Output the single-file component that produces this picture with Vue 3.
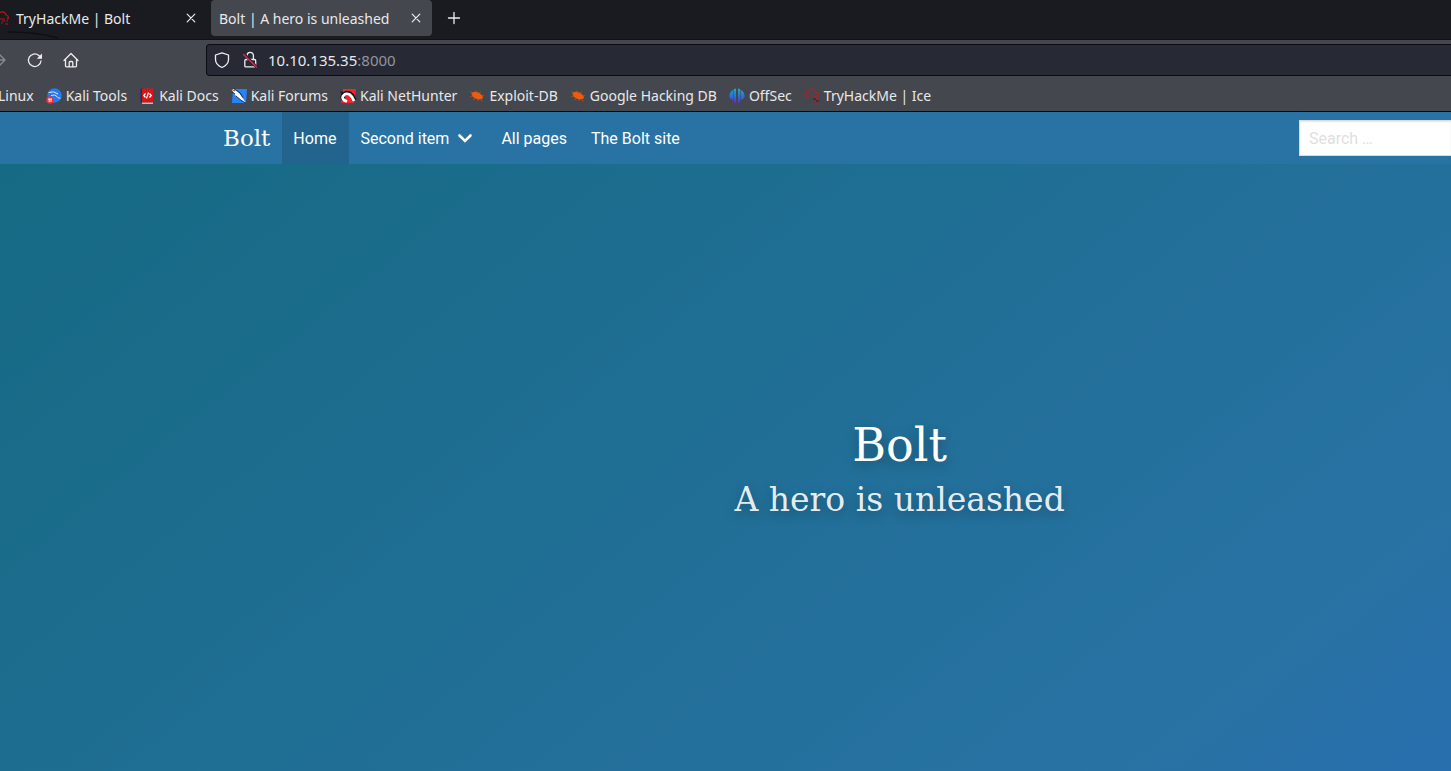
<script setup>
import { ref } from 'vue'

const address = ref('10.10.135.35:8000')
const search = ref('')
const bookmarks = [
  { label: 'Linux', icon: '' },
  { label: 'Kali Tools', icon: 'tools' },
  { label: 'Kali Docs', icon: 'docs' },
  { label: 'Kali Forums', icon: 'forums' },
  { label: 'Kali NetHunter', icon: 'nethunter' },
  { label: 'Exploit-DB', icon: 'bug' },
  { label: 'Google Hacking DB', icon: 'bug' },
  { label: 'OffSec', icon: 'offsec' },
  { label: 'TryHackMe | Ice', icon: 'thm' }
]
</script>

<template>
  <div class="window">
    <header class="browser">
      <div class="tabs">
        <svg class="swoosh" viewBox="0 0 64 8" aria-hidden="true"><path d="M8 1C30 1 44 3 58 7" fill="none" stroke="#0e0f13" stroke-width="1.4" /></svg>
        <div class="tab first">
          <svg class="tab-icon" viewBox="0 0 16 16" aria-hidden="true">
            <path d="M1 8C1 5 3 4 5 4c1-3 6-3 7 1 3 0 3 4 1 4M6 9h5" fill="none" stroke="#b3161b" stroke-width="1.2" />
            <path d="M8 11h3M12 11h2M7 13h2M11 14h3M13 8h2" stroke="#b3161b" stroke-width="1" />
          </svg>
          <button class="tab-title">TryHackMe | Bolt</button>
          <button class="close" aria-label="Close TryHackMe tab"><svg viewBox="0 0 16 16"><path d="M4.2 4.2l7.6 7.6M11.8 4.2l-7.6 7.6" /></svg></button>
        </div>
        <div class="tab active">
          <button class="tab-title">Bolt | A hero is unleashed</button>
          <button class="close" aria-label="Close Bolt tab"><svg viewBox="0 0 16 16"><path d="M4.2 4.2l7.6 7.6M11.8 4.2l-7.6 7.6" /></svg></button>
        </div>
        <button class="new-tab" aria-label="New tab"><svg viewBox="0 0 16 16"><path d="M8 2.500v11M2.500 8h11" /></svg></button>
      </div>

      <div class="toolbar">
        <div class="controls">
          <button class="forward" aria-label="Forward" disabled><svg viewBox="0 0 16 16"><path d="M1 8h13M8.5 2.5L14 8l-5.500 5.500" /></svg></button>
          <button aria-label="Reload"><svg viewBox="0 0 16 16"><path d="M14 9A6.300 6.300 0 1 1 11.800 3.400L13 4.500" /><path d="M15 1.500v5.200H9.800z" class="solid" /></svg></button>
          <button aria-label="Home page"><svg viewBox="0 0 16 16"><path d="M1 8.500l7-7L15 8.500M2.500 7.500v6.300q0 1 1 1h9q1 0 1-1V7.500M6.200 14.500v-4q0-1 1-1h1.600q1 0 1 1v4" /></svg></button>
        </div>
        <div class="urlbar">
          <svg viewBox="0 0 16 16" aria-hidden="true"><path d="M8 .8L14.500 3v4.500c0 3.500-3 6.500-6.500 8-3.500-1.500-6.500-4.500-6.500-8V3z" /></svg>
          <svg class="lock" viewBox="0 0 16 16" aria-hidden="true"><path d="M5 7V3.500a3.200 3.200 0 0 1 6.400 0V7M4 7.500h8.500q1.200 0 1.200 1.200v5q0 1.200-1.200 1.200H4q-1.200 0-1.200-1.200v-5q0-1.200 1.200-1.200z" /><path d="M1.500 1.500l13 13.500" class="gap" /><path d="M1.500 2.500l13 12.500" class="slash" /></svg>
          <label class="address">
            <span class="address-text" aria-hidden="true"><span>{{ address.split(':')[0] }}</span><span class="port">:{{ address.split(':')[1] }}</span></span>
            <input v-model="address" type="text" aria-label="Address" />
          </label>
        </div>
      </div>

      <nav class="bookmarks" aria-label="Bookmarks">
        <a v-for="b in bookmarks" :key="b.label" href="#" class="bookmark">
          <svg v-if="b.icon === 'tools'" viewBox="0 0 16 16" aria-hidden="true">
            <circle cx="8.500" cy="7.500" r="7.200" fill="#2878ee" />
            <path d="M2.500 4.500Q8 2.500 12 6M5 7.500q4-1.500 6 1 1 2 3.500 1.700" fill="none" stroke="#d8e8ff" stroke-width="1" />
            <circle cx="4" cy="12" r="3.800" fill="#e8323a" /><path d="M2 11h4M3.200 11v3M5 11v3" stroke="#fff" stroke-width=".9" />
          </svg>
          <svg v-else-if="b.icon === 'docs'" viewBox="0 0 16 16" aria-hidden="true">
            <path d="M1.500.5h3v14h-3z" fill="#12306b" /><path d="M3 .5h11v14H3z" fill="#dc1217" /><path d="M3 14.500h11V16H3z" fill="#c3b9b7" />
            <path d="M6.500 5.500L4.700 7.500l1.800 2M10.500 5.500l1.800 2-1.800 2M9.500 4.500l-2 6" fill="none" stroke="#fff" stroke-width="1.200" />
          </svg>
          <svg v-else-if="b.icon === 'forums'" viewBox="0 0 16 16" aria-hidden="true">
            <path d="M2 1h14l-1 14H1z" fill="#2583f7" /><path d="M0 1l3 0 5 4 3 4 4 6-5-3-5-4z" fill="#fff" />
            <path d="M0 1l4 2M1 4l3 2M3 .8l6 4 3 5M5 8l6 5 4 2" fill="none" stroke="#161a22" stroke-width=".8" />
          </svg>
          <svg v-else-if="b.icon === 'nethunter'" viewBox="0 0 16 16" aria-hidden="true">
            <path d="M3 1h13l-2 14H1z" fill="#ee2630" />
            <path d="M4 11.500Q1 8.500 4.500 6q4-2.500 7.500 1.500l2.500 5" fill="none" stroke="#14171d" stroke-width="4.600" />
            <path d="M7 13.500Q1.500 11.500 2.800 8.500 5 4.500 9.500 6.500q3 2 4.500 6.500" fill="none" stroke="#fff" stroke-width="2.800" />
            <path d="M0 3l4 1.500L2 7z" fill="#181b22" />
          </svg>
          <svg v-else-if="b.icon === 'bug'" viewBox="0 0 16 16" aria-hidden="true">
            <path d="M2.500 5q4-2.500 8.500.5 3 2 3 4.500-3 2.500-7.500.5Q2.500 8.500 2.500 5z" fill="#f05a0c" />
            <path d="M4 5L1 3.500M7 4V2.500M10 5l2-1.500M13 8l2-.5M12 11l1 2.500M7 10l-3 2M4 8L1 8.500M9 11v2" stroke="#a85530" stroke-width=".8" />
          </svg>
          <svg v-else-if="b.icon === 'offsec'" viewBox="0 0 16 16" aria-hidden="true">
            <defs><linearGradient id="ray" x1="0" y1="0" x2="0" y2="1"><stop offset="0" stop-color="#16b3c5" /><stop offset=".5" stop-color="#2c70d8" /><stop offset="1" stop-color="#6b22c9" /></linearGradient></defs>
            <path d="M7 .5v15.300Q4.800 15 4.600 13V1.500Q5.800.7 7 .5zM9 .5v15.300q2.200-.8 2.400-2.800V1.500Q10.200.7 9 .5zM4 2v10Q0 11 .4 7.500.9 3.500 4 2zM12 2v10q4-1 3.600-4.500Q15.100 3.500 12 2z" fill="url(#ray)" />
          </svg>
          <svg v-else-if="b.icon === 'thm'" viewBox="0 0 16 16" aria-hidden="true">
            <path d="M5 9H2.500Q0 8 1 5.500q1-1.500 3-1.200Q5 .5 8.500 1q2.800.5 3 3Q15 4 14.500 7q-.5 2-2 2H8" fill="none" stroke="#c9171e" stroke-width="1" />
            <path d="M4 7h2M12 11h3M9 13h2M10 15h5" stroke="#a91f26" stroke-width="1" /><path d="M9 11h3M12 13h3" stroke="#22252c" stroke-width="1.200" />
          </svg>
          <span>{{ b.label }}</span>
        </a>
      </nav>
    </header>

    <nav class="site-nav" aria-label="Main">
      <a href="#" class="brand">Bolt</a>
      <a href="#" class="item current">Home</a>
      <a href="#" class="item">Second item<svg class="chevron" viewBox="0 0 16 16" aria-hidden="true"><path d="M2.500 5.500L8 11l5.500-5.500" /></svg></a>
      <a href="#" class="item">All pages</a>
      <a href="#" class="item">The Bolt site</a>
      <input v-model="search" class="search" type="text" placeholder="Search …" aria-label="Search" />
    </nav>

    <main class="hero">
      <h1>Bolt</h1>
      <p>A hero is unleashed</p>
    </main>
  </div>
</template>

<style>
html, body, #app { height: 100%; }
body { margin: 0; overflow: hidden; }
</style>

<style scoped>
.window { min-height: 100%; display: flex; flex-direction: column; overflow: hidden; font-family: "Noto Sans", "Open Sans", sans-serif; font-size: 14px; color: #e8e8ea; }
.window *, .window *::before { box-sizing: border-box; }
button { display: flex; align-items: center; padding: 0; border: 0; background: none; color: inherit; font: inherit; white-space: nowrap; }
a { color: inherit; text-decoration: none; white-space: nowrap; }
svg { width: 16px; height: 16px; flex: none; display: block; overflow: visible; }
button svg, .urlbar svg { fill: none; stroke: #eeeef0; stroke-width: 1.3; stroke-linecap: round; stroke-linejoin: round; }
.browser { background: #44474e; border-bottom: 1px solid #08090e; }
.tabs { position: relative; display: flex; height: 40px; padding-bottom: 3px; background: #1a1b20; border-bottom: 1px solid #101116; }
.swoosh { position: absolute; left: 0; bottom: 0; width: 64px; height: 8px; }
.tab { display: flex; align-items: center; justify-content: space-between; width: 221px; padding: 0 8px; border-radius: 4px; }
.tab.first { width: 211px; padding: 0 12px 0 0; }
.tab-icon { margin-left: -6px; margin-right: 6px; }
.first .tab-title { flex: 1; }
.tab.active { background: #44474e; }
.close svg { stroke-width: 1.2; }
.new-tab { margin-left: 14px; }
.toolbar { display: flex; align-items: center; height: 40px; }
.controls { display: flex; gap: 20px; width: 206px; }
.forward { margin-left: -9px; opacity: .4; }
button .solid { fill: #eeeef0; stroke: none; }
.urlbar { flex: 1; display: flex; align-items: center; gap: 12px; height: 32px; padding-left: 7px; background: #272935; border: 1px solid #0b0c13; border-right: 0; border-radius: 4px 0 0 4px; }
.urlbar .gap { stroke: #272935; stroke-width: 3; }
.urlbar .slash { stroke: #e22850; }
.address { flex: 1; display: grid; align-items: center; margin-left: -2px; font-size: 15px; }
.address > * { grid-area: 1 / 1; }
.port { color: #93949b; }
.address input { width: 100%; padding: 0; border: 0; outline: 0; background: none; color: transparent; caret-color: #fff; font: inherit; }
.bookmarks { display: flex; align-items: center; gap: 12px; height: 31px; margin-left: -2px; }
.bookmark { display: flex; align-items: center; gap: 4px; }
.site-nav { display: flex; align-items: stretch; height: 52px; padding-left: 211px; background: #2872a4; color: #fff; font-family: Roboto, sans-serif; font-size: 16px; }
.brand, .item { display: flex; align-items: center; }
.brand { padding: 0 12px; font-family: "DejaVu Serif", serif; font-size: 23px; }
.item { padding: 0 13px 0 11px; }
.current { background: #23648f; }
.chevron { margin: 0 4px 0 8px; fill: none; stroke: #fff; stroke-width: 2.6; stroke-linecap: round; }
.search { align-self: center; width: 152px; height: 36px; margin-left: auto; padding: 0 9px; border: 1px solid #dbdbdb; border-right: 0; border-radius: 0; outline: 0; background: #fff; box-shadow: inset 0 1px 2px rgba(10, 10, 10, .1); color: #363636; font: inherit; }
.search::placeholder { color: #dfdfdf; opacity: 1; }
.hero { flex: 1; display: flex; flex-direction: column; align-items: center; justify-content: center; padding: 8px 0 0 24%; background: linear-gradient(141deg, #166a83 0%, #2872a4 86%, #2769be 122%); color: #fff; font-family: "DejaVu Serif", serif; text-shadow: 0 4px 12px rgba(0, 0, 0, .3); text-align: center; }
.hero h1 { margin: 0; font-size: 46px; font-weight: 400; line-height: 56px; }
.hero p { margin: 0; font-size: 33px; line-height: 54px; color: rgba(255, 255, 255, .9); }
</style>
